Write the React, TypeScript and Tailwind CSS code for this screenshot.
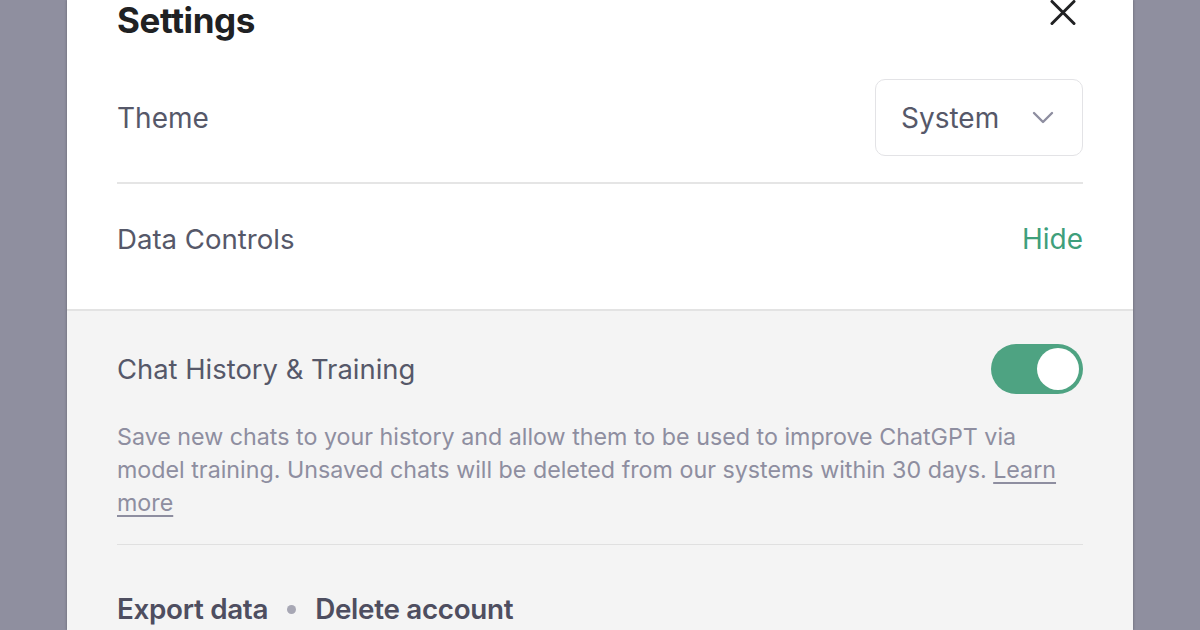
import React from "react";

export default function App() {
  const font = { fontFamily: "Inter, 'Noto Sans', sans-serif" };
  return (
    <div
      className="w-[1200px] h-[630px] overflow-hidden bg-[#8f8f9f] flex justify-center"
      style={font}
    >
      <div className="w-[1066px] h-[630px] bg-white flex flex-col shadow-[-1px_0_2px_rgba(0,0,0,0.15),1px_0_2px_rgba(0,0,0,0.15)]">
        {/* Header */}
        <div className="px-[50px] flex items-center justify-between h-[40px]">
          <div className="text-[35px] leading-[40px] font-bold text-[#202123] tracking-[-0.4px]">
            Settings
          </div>
          <svg width="26" height="26" viewBox="0 0 26 26" className="-mt-[15px] mr-[7px]">
            <path d="M2 1.5 L24 23.5 M24 1.5 L2 23.5" stroke="#202123" strokeWidth="3" strokeLinecap="round" />
          </svg>
        </div>

        {/* Theme */}
        <div className="px-[50px] mt-[39px]">
          <div className="flex items-center justify-between h-[77px]">
            <div className="text-[28px] leading-[34px] text-[#565869]">Theme</div>
            <div className="w-[208px] h-[77px] rounded-[10px] border-[1.5px] border-[#e3e3e6] flex items-center justify-between pl-[25px] pr-[28px]">
              <span className="text-[28px] leading-[34px] text-[#565869]">System</span>
              <svg width="22" height="13" viewBox="0 0 22 13">
                <path d="M2 2 L11 11 L20 2" stroke="#8e8ea0" strokeWidth="2.4" fill="none" strokeLinecap="round" strokeLinejoin="round" />
              </svg>
            </div>
          </div>
          <div className="mt-[26px] h-[1.5px] bg-[#e5e5e5]" />
        </div>

        {/* Data Controls */}
        <div className="px-[50px] pt-[38px] pb-[53px] flex items-center justify-between">
          <div className="text-[27.6px] leading-[34px] text-[#565869]">Data Controls</div>
          <div className="text-[28px] leading-[34px] text-[#3f9f7b]">Hide</div>
        </div>

        {/* Grey section */}
        <div className="flex-1 bg-[#f4f4f4] border-t-[2px] border-[#e3e3e3] px-[50px]">
          <div className="mt-[33px] flex items-center justify-between h-[50px]">
            <div className="text-[27.4px] leading-[34px] text-[#565869]">Chat History &amp; Training</div>
            <div className="w-[92px] h-[50px] rounded-full bg-[#4ea382] flex items-center justify-end pr-[4px]">
              <div className="w-[42px] h-[42px] rounded-full bg-white" />
            </div>
          </div>
          <p className="mt-[26px] text-[23.25px] leading-[33px] text-[#8e8ea0]">
            Save new chats to your history and allow them to be used to improve ChatGPT via model
            training. Unsaved chats will be deleted from our systems within 30 days.{" "}
            <span className="underline underline-offset-[4px] decoration-[1.5px]">Learn more</span>
          </p>
          <div className="mt-[25px] h-[1.5px] bg-[#e0e0e0]" />
          <div className="mt-[47px] flex items-center text-[27.8px] leading-[34px] font-semibold text-[#4e4e60] tracking-[-0.3px]">
            <span>Export data</span>
            <span className="mx-[19px] w-[9px] h-[9px] rounded-full bg-[#a7a7b4]" />
            <span>Delete account</span>
          </div>
        </div>
      </div>
    </div>
  );
}
